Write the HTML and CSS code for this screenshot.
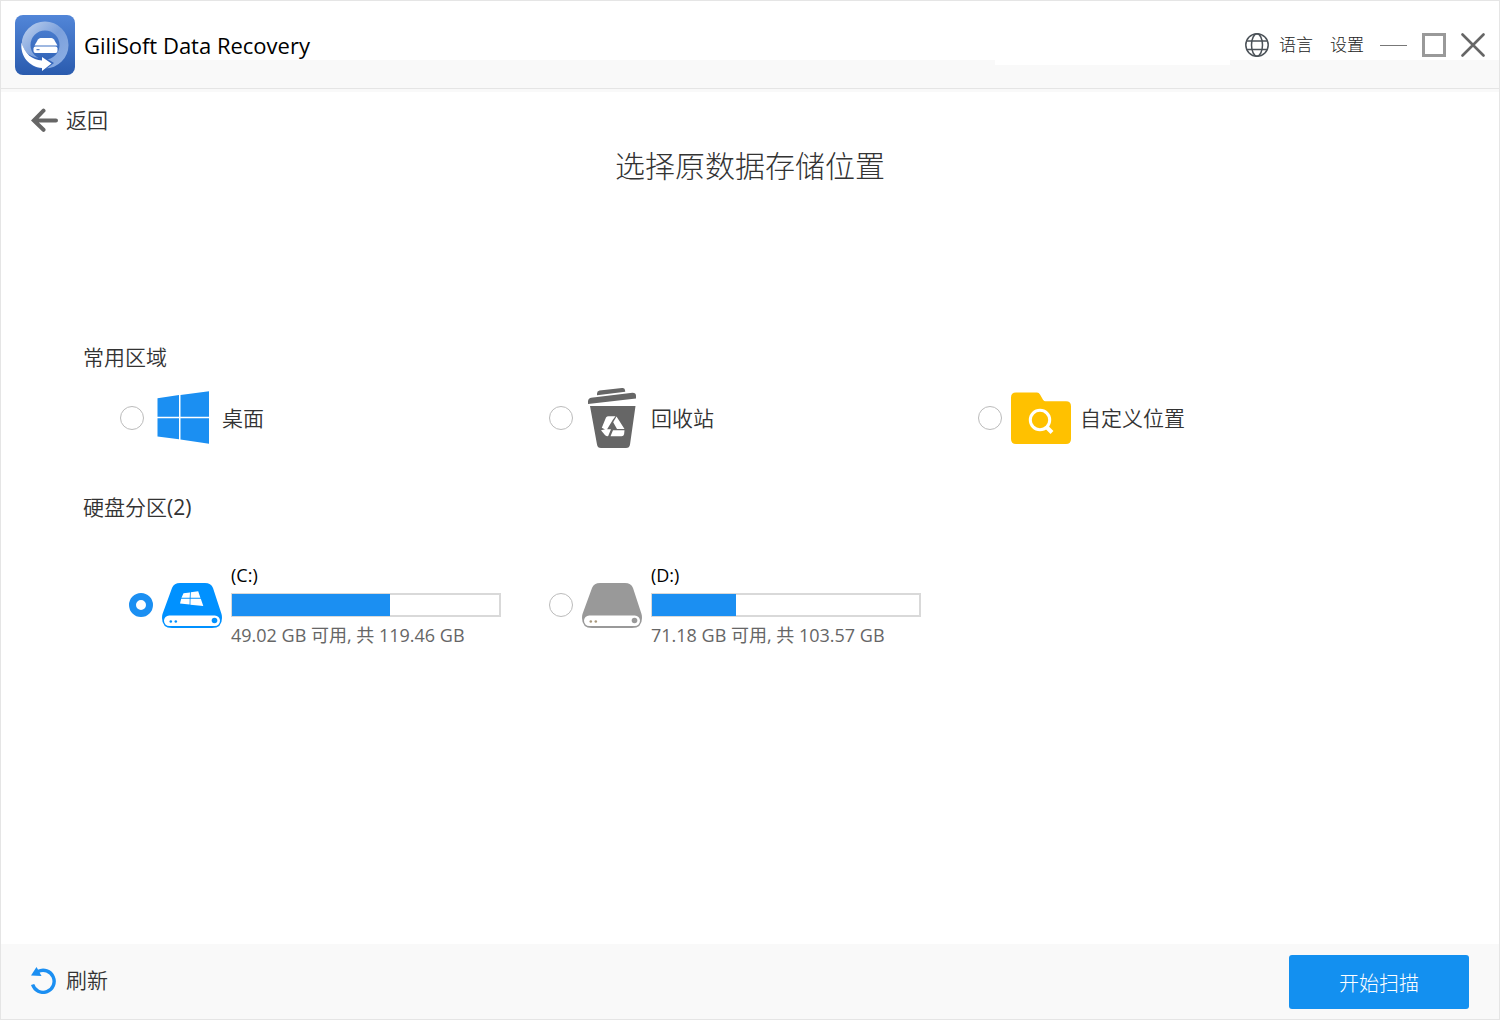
FILE: index.html
```html
<!DOCTYPE html>
<html lang="zh-CN">
<head>
<meta charset="utf-8">
<meta name="viewport" content="width=device-width, initial-scale=1">
<title>GiliSoft Data Recovery</title>
<link rel="stylesheet" href="styles.css">
</head>
<body>
<div class="window">
  <header class="titlebar">
    <svg class="logo" viewBox="0 0 60 60" aria-hidden="true">
      <defs>
        <linearGradient id="tile" x1="0" y1="0" x2="0" y2="1">
          <stop offset="0" stop-color="#5286d8"/>
          <stop offset="1" stop-color="#2a5bae"/>
        </linearGradient>
        <linearGradient id="ring" x1="0" y1="0" x2="1" y2="1">
          <stop offset="0" stop-color="#c3d4ef"/>
          <stop offset=".5" stop-color="#7ba0dc"/>
          <stop offset="1" stop-color="#8fb0e4"/>
        </linearGradient>
      </defs>
      <rect width="60" height="60" rx="8" fill="url(#tile)"/>
      <path fill="url(#ring)" fill-rule="evenodd" d="M30 6.500a23.500 23.500 0 1 1 0 47a23.500 23.500 0 1 1 0-47zM30 15.500a14.500 14.500 0 1 0 0 29a14.500 14.500 0 1 0 0-29z"/>
      <path fill="#3566bb" d="M6 24C8 39 17 43 27 43l-1-3 13 8-8 6C16 56 6 43 6 24z"/>
      <path fill="#fff" d="M6.500 27.500C10 39 17 45 27 45.500V42l9.500 6.500L27 56v-3C14 52 5 41 6.500 27.500z"/>
      <path fill="#fff" d="M25.500 23h11q1.500 0 2.500 1.500l3.500 6H19.500l3.500-6Q24 23 25.500 23z"/>
      <rect x="18.500" y="31.500" width="24" height="6.500" rx="2" fill="#fff"/>
      <path stroke="#3566bb" d="M21.500 34.700h3"/>
    </svg>
    <h1 class="app-name">GiliSoft Data Recovery</h1>
    <nav class="actions">
      <button class="action language" type="button">
        <svg class="icon-24" viewBox="0 0 24 24" fill="none" stroke="#4b5258" stroke-width="1.500" aria-hidden="true">
          <circle cx="12" cy="12" r="11.200"/>
          <ellipse cx="12" cy="12" rx="5.500" ry="11.200"/>
          <path d="M2 8h20M2 16.500h20"/>
        </svg>
        语言
      </button>
      <button class="action settings" type="button">设置</button>
      <button class="action" type="button" aria-label="最小化">
        <svg class="icon-min" viewBox="0 0 27 24" aria-hidden="true"><path fill="none" stroke="#777" d="M0 12.500h27"/></svg>
      </button>
      <button class="action" type="button" aria-label="最大化">
        <svg class="icon-24" viewBox="0 0 24 24" aria-hidden="true"><rect x="1.500" y="1.500" width="21" height="21" fill="none" stroke="#999" stroke-width="3"/></svg>
      </button>
      <button class="action" type="button" aria-label="关闭">
        <svg class="icon-24" viewBox="0 0 24 24" aria-hidden="true"><path fill="none" stroke="#666" stroke-width="2.600" stroke-linecap="round" d="M1.500 1.500l21 21M22.500 1.500l-21 21"/></svg>
      </button>
    </nav>
  </header>

  <main class="content">
    <button class="text-button" type="button">
      <svg class="icon-27" viewBox="0 0 27 24" fill="none" stroke="#666" stroke-width="4" stroke-linecap="round" aria-hidden="true"><path d="M12.500 2.700L2.800 12.500l9.700 9.300M3.500 12.500H25"/></svg>
      返回
    </button>
    <h2 class="page-title">选择原数据存储位置</h2>

    <section class="group">
      <h3 class="group-title">常用区域</h3>
      <div class="places">
        <label class="choice">
          <input class="radio" type="radio" name="location">
          <svg class="choice-icon" viewBox="0 0 60 60" fill="#1b8ff2" aria-hidden="true">
            <path d="M4.500 10.200l21.500-3.100V28.800H4.500zM27.500 6.900L56 3.200V28.800H27.500zM4.500 30.200H26V51.300L4.500 48.500zM27.500 30.200H56V55.700L27.500 51.600z"/>
          </svg>
          桌面
        </label>
        <label class="choice">
          <input class="radio" type="radio" name="location">
          <svg class="choice-icon" viewBox="0 0 60 60" fill="#666" aria-hidden="true">
            <path d="M15 7.300V5.500Q15 3 17.500 2.600L40 0q3-.3 3.200 3v.8zM6 16v-2.500Q6.200 10.300 9 9.800L50.500 4.800q3.500 0 3.500 3V10.500z"/>
            <path d="M8 18h45.500L48 56.500q-.5 3.500-4 3.500H19q-3.500 0-4-3.500z"/>
            <path fill="#fff" d="M24 29.500q1-1.500 3-1.300h6.500l-2.500 3.300-6.500 10.800-4.700-2.600zM34.500 28.600l8 12.300H35L31.200 34.300zM19 42.200l5.500-1.200 4.500.3-2.800 6.700q-2.200.6-3.500-1.200zM31 42.300h11.500l-.4 4q-.5 2-2.500 2H28.500z"/>
          </svg>
          回收站
        </label>
        <label class="choice">
          <input class="radio" type="radio" name="location">
          <svg class="choice-icon" viewBox="0 0 60 60" aria-hidden="true">
            <path fill="#ffc100" d="M0 9.500Q0 4.500 5 4.500H26q2 0 3 2l3 5.200Q33 13.200 34.500 13.200H55q5 0 5 5V51q0 5-5 5H5q-5 0-5-5z"/>
            <circle cx="29" cy="32" r="9.700" fill="none" stroke="#fff" stroke-width="3"/>
            <path d="M36 39.500l5 5" stroke="#fff" stroke-width="4"/>
          </svg>
          自定义位置
        </label>
      </div>
    </section>

    <section class="group">
      <h3 class="group-title">硬盘分区<span class="count">(2)</span></h3>
      <div class="drives">
        <label class="choice">
          <input class="radio" type="radio" name="location" checked>
          <svg class="choice-icon" viewBox="0 0 60 60" fill="#0091ff" aria-hidden="true">
            <path d="M18 8H43q6 0 8 5l8.500 26q.5 1.500.5 4 0 10-10 10H10Q0 53 0 43q0-2.500.500-4L10 13q2-5 8-5z"/>
            <rect x="2" y="40.500" width="56" height="10.500" rx="5.200" fill="#fff"/>
            <circle cx="8.800" cy="46.500" r="1.300"/><circle cx="13.800" cy="46.500" r="1.300"/><circle cx="52.500" cy="45.500" r="2.800"/>
            <path fill="#fff" d="M21.500 18.200l6.500-.8-.3 5.400H19.500zM28.800 17.300l7.400-1 2.200 6.500H28.600zM19.200 23.800h8.500l-.1 5.800-9.600-1.100zM28.500 23.800h10.300l2.500 7.200-12.900-1.300z"/>
          </svg>
          <span class="drive-info">
            <span class="drive-name">(C:)</span>
            <span class="usage"><span class="usage-fill" style="width: 59%"></span></span>
            <span class="drive-space">49.02 GB 可用, 共 119.46 GB</span>
          </span>
        </label>
        <label class="choice">
          <input class="radio" type="radio" name="location">
          <svg class="choice-icon" viewBox="0 0 60 60" fill="#999" aria-hidden="true">
            <path d="M18 8H43q6 0 8 5l8.500 26q.5 1.500.5 4 0 10-10 10H10Q0 53 0 43q0-2.500.500-4L10 13q2-5 8-5z"/>
            <rect x="2" y="40.500" width="56" height="10.500" rx="5.200" fill="#fff"/>
            <g fill="#a8987c"><circle cx="8.800" cy="46.500" r="1.300"/><circle cx="13.800" cy="46.500" r="1.300"/></g>
            <circle cx="52.500" cy="45.500" r="2.800"/>
          </svg>
          <span class="drive-info">
            <span class="drive-name">(D:)</span>
            <span class="usage"><span class="usage-fill" style="width: 31.3%"></span></span>
            <span class="drive-space">71.18 GB 可用, 共 103.57 GB</span>
          </span>
        </label>
      </div>
    </section>
  </main>

  <footer class="footer">
    <button class="text-button" type="button">
      <svg class="icon-27" viewBox="0 0 27 28" aria-hidden="true">
        <path fill="none" stroke="#1b8ff2" stroke-width="3.400" d="M7 5.600A11 11 0 1 1 1.600 18.500"/>
        <path fill="#1b8ff2" d="M5.500 1l5 9L0 9.500z"/>
      </svg>
      刷新
    </button>
    <button class="scan" type="button">开始扫描</button>
  </footer>
</div>
</body>
</html>
```
FILE: styles.css
```css
* {
  box-sizing: border-box;
}

body {
  margin: 0;
  background: #fff;
  color: #333;
  font: 350 21px/30px "Open Sans", "Noto Sans CJK SC", sans-serif;
}

h1, h2, h3 {
  margin: 0;
  font-size: inherit;
  font-weight: inherit;
}

button {
  padding: 0;
  border: 0;
  background: none;
  color: inherit;
  font: inherit;
  cursor: pointer;
}

svg {
  display: block;
  flex: none;
}

.window {
  display: flex;
  flex-direction: column;
  min-height: 100vh;
  border: 1px solid #e5e5e5;
}

/* Title bar */
.titlebar {
  display: flex;
  align-items: center;
  gap: 9px;
  padding: 14px 14px 13px;
  border-bottom: 1px solid #e5e5e5;
  background:
    linear-gradient(#fff, #fff) right 269px top 59px / 235px 5px no-repeat,
    linear-gradient(#fff 59px, #f9f9f9 59px);
}

.logo {
  width: 60px;
  height: 60px;
}

.app-name {
  color: #000;
  font-size: 22px;
  font-weight: 400;
}

.actions {
  display: flex;
  align-items: center;
  gap: 15px;
  margin-left: auto;
}

.action {
  display: flex;
  align-items: center;
  gap: 10px;
  color: #222;
  font-size: 17px;
  font-weight: 300;
}

.language {
  margin-right: 2px;
}

.settings {
  margin-right: 1px;
}

.icon-24 {
  width: 24px;
  height: 24px;
}

.icon-min {
  width: 27px;
  height: 24px;
}

.icon-27 {
  width: 27px;
}

/* Location picker */
.content {
  flex: 1;
  border-top: 3px solid #f9f9f9;
  padding: 13px 30px 60px;
}

.text-button {
  display: flex;
  align-items: center;
  gap: 8px;
}

.page-title {
  margin-top: 8px;
  font-size: 30px;
  font-weight: 300;
  line-height: 45px;
  text-align: center;
}

.group {
  padding-left: 52px;
}

.page-title + .group {
  margin-top: 154px;
}

.group + .group {
  margin-top: 44px;
}

.count {
  font-weight: 400;
}

.places,
.drives {
  display: grid;
  grid-template-columns: repeat(3, 1fr);
}

.places {
  margin: 16px 62px 0 37px;
}

.drives {
  margin: 38px 80px 0 46px;
}

.choice {
  display: flex;
  align-items: center;
  gap: 9px;
}

.radio {
  flex: none;
  width: 24px;
  height: 24px;
  margin: 0;
  border: 1px solid #bbb;
  border-radius: 50%;
  background: #fff;
  appearance: none;
}

.radio:checked {
  border: 7px solid #1b8ff2;
}

.choice-icon {
  width: 60px;
  height: 60px;
}

.drive-info {
  display: flex;
  flex-direction: column;
  gap: 3px;
  width: 270px;
  font-size: 18px;
  font-weight: 400;
}

.drive-name {
  color: #000;
}

.usage {
  height: 24px;
  border: 1px solid #d9d9d9;
  box-shadow: inset 0 0 0 1px #d9d9d9;
}

.usage-fill {
  display: block;
  height: 100%;
  background: #1b8ff2;
}

.drive-space {
  color: #666;
}

/* Footer */
.footer {
  display: flex;
  align-items: center;
  justify-content: space-between;
  padding: 11px 30px 10px;
  background: #f9f9f9;
}

.footer .text-button {
  padding-bottom: 4px;
}

.scan {
  width: 180px;
  height: 54px;
  padding-top: 3px;
  border-radius: 3px;
  background: #1390f0;
  color: #fff;
  font-size: 20px;
  font-weight: 300;
}
```
